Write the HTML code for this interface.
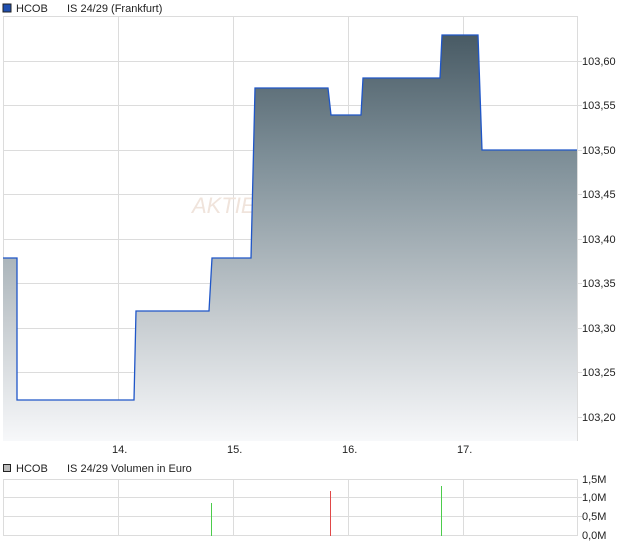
<!DOCTYPE html>
<html><head><meta charset="utf-8"><style>
body{margin:0;background:#fff;width:620px;height:546px;overflow:hidden;font-family:"Liberation Sans",sans-serif;}
svg text{font-family:"Liberation Sans",sans-serif;font-size:11px;fill:#222;}
</style></head><body>
<svg width="620" height="546" viewBox="0 0 620 546">
<defs>
<linearGradient id="g" x1="0" y1="34" x2="0" y2="441" gradientUnits="userSpaceOnUse">
<stop offset="0" stop-color="#485a64"/>
<stop offset="0.3" stop-color="#7d8e97"/>
<stop offset="0.7" stop-color="#c6ccd0"/>
<stop offset="1" stop-color="#f7f8fa"/>
</linearGradient>
</defs>
<rect x="3" y="4" width="8" height="8" fill="#1f4fb0" stroke="#222" stroke-width="1"/>
<text x="16" y="12">HCOB</text>
<text x="67" y="12">IS 24/29 (Frankfurt)</text>
<g stroke="#dcdcdc" stroke-width="1">
<rect x="3.5" y="16.5" width="574" height="424" fill="none"/>
<line x1="118.5" y1="16" x2="118.5" y2="441"/><line x1="233.5" y1="16" x2="233.5" y2="441"/>
<line x1="348.5" y1="16" x2="348.5" y2="441"/><line x1="463.5" y1="16" x2="463.5" y2="441"/>
<line x1="3" y1="61.5" x2="582" y2="61.5"/><line x1="3" y1="105.5" x2="582" y2="105.5"/>
<line x1="3" y1="150.5" x2="582" y2="150.5"/><line x1="3" y1="194.5" x2="582" y2="194.5"/>
<line x1="3" y1="239.5" x2="582" y2="239.5"/><line x1="3" y1="283.5" x2="582" y2="283.5"/>
<line x1="3" y1="328.5" x2="582" y2="328.5"/><line x1="3" y1="372.5" x2="582" y2="372.5"/>
<line x1="3" y1="417.5" x2="582" y2="417.5"/>
</g>
<text x="192" y="213" style="font-size:22px;font-style:italic;fill:#f0e4dc">AKTIEN</text>
<path d="M3,258 L17,258 L17,400 L134,400 L136,311 L209,311 L212,258 L251,258 L255,88 L328,88 L331,115 L361,115 L363,78 L440,78 L442,35 L478,35 L482,150 L577,150 L577,441 L3,441 Z" fill="url(#g)"/>
<path d="M3,258 L17,258 L17,400 L134,400 L136,311 L209,311 L212,258 L251,258 L255,88 L328,88 L331,115 L361,115 L363,78 L440,78 L442,35 L478,35 L482,150 L577,150" fill="none" stroke="#1f56c8" stroke-width="1.3"/>
<g>
<text x="582" y="65">103,60</text><text x="582" y="109">103,55</text><text x="582" y="154">103,50</text>
<text x="582" y="198">103,45</text><text x="582" y="243">103,40</text><text x="582" y="287">103,35</text>
<text x="582" y="332">103,30</text><text x="582" y="376">103,25</text><text x="582" y="421">103,20</text>
</g>
<text x="112" y="453">14.</text><text x="227" y="453">15.</text><text x="342" y="453">16.</text><text x="457" y="453">17.</text>
<rect x="3.5" y="464.5" width="7" height="7" fill="#bbb" stroke="#222"/>
<text x="16" y="472">HCOB</text>
<text x="67" y="472">IS 24/29 Volumen in Euro</text>
<g stroke="#dcdcdc" stroke-width="1">
<rect x="3.5" y="479.5" width="574" height="56" fill="none"/>
<line x1="3" y1="497.5" x2="582" y2="497.5"/><line x1="3" y1="516.5" x2="582" y2="516.5"/>
<line x1="118.5" y1="479" x2="118.5" y2="536"/><line x1="233.5" y1="479" x2="233.5" y2="536"/>
<line x1="348.5" y1="479" x2="348.5" y2="536"/><line x1="463.5" y1="479" x2="463.5" y2="536"/>
</g>
<line x1="211.5" y1="503" x2="211.5" y2="536" stroke="#4ccc4c"/>
<line x1="330.5" y1="491" x2="330.5" y2="536" stroke="#e04848"/>
<line x1="441.5" y1="486" x2="441.5" y2="536" stroke="#4ccc4c"/>
<text x="582" y="483">1,5M</text><text x="582" y="501">1,0M</text><text x="582" y="520">0,5M</text><text x="582" y="539">0,0M</text>
</svg>
</body></html>
